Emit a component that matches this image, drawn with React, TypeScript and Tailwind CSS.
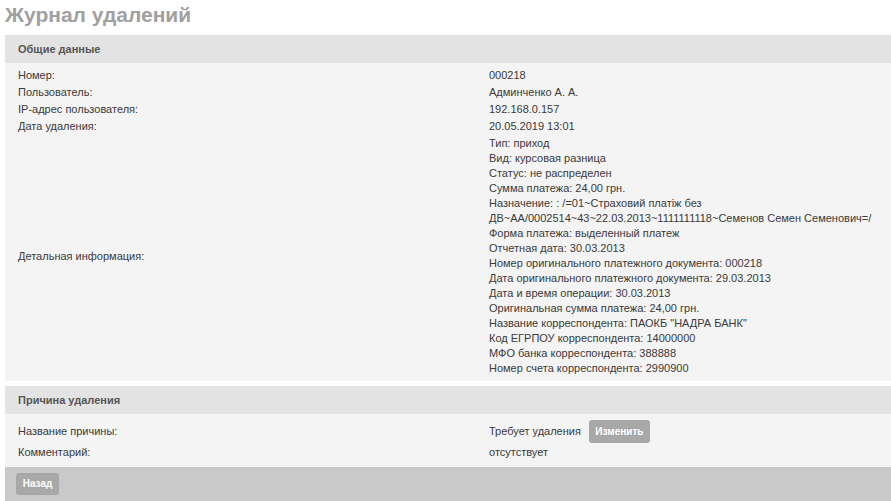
/* Журнал удалений — карточка удалённой записи */

const general: [string, string][] = [
  ['Номер:', '000218'],
  ['Пользователь:', 'Админченко А. А.'],
  ['IP-адрес пользователя:', '192.168.0.157'],
  ['Дата удаления:', '20.05.2019 13:01'],
];

const details = [
  'Тип: приход',
  'Вид: курсовая разница',
  'Статус: не распределен',
  'Сумма платежа: 24,00 грн.',
  'Назначение: : /=01~Страховий платіж без',
  'ДВ~АА/0002514~43~22.03.2013~1111111118~Семенов Семен Семенович=/',
  'Форма платежа: выделенный платеж',
  'Отчетная дата: 30.03.2013',
  'Номер оригинального платежного документа: 000218',
  'Дата оригинального платежного документа: 29.03.2013',
  'Дата и время операции: 30.03.2013',
  'Оригинальная сумма платежа: 24,00 грн.',
  'Название корреспондента: ПАОКБ "НАДРА БАНК"',
  'Код ЕГРПОУ корреспондента: 14000000',
  'МФО банка корреспондента: 388888',
  'Номер счета корреспондента: 2990900',
];

function SectionHeader({ title }: { title: string }) {
  return (
    <div className="h-[28px] bg-[#e3e3e3] flex items-center pl-[13px] text-[11px] font-bold text-[#555]">
      {title}
    </div>
  );
}

function Btn({ label, className = '' }: { label: string; className?: string }) {
  return (
    <button
      className={`bg-[#a8a8a8] text-white font-bold text-[10px] rounded-[3px] leading-none ${className}`}
    >
      {label}
    </button>
  );
}

export default function App() {
  return (
    <div
      className="min-h-[501px] bg-white pl-[5px] text-[11px] text-[#3a3a3a]"
      style={{ fontFamily: '"Liberation Sans", Arial, sans-serif' }}
    >
      <h1 className="h-[35px] pt-[3px] text-[21px] font-bold text-[#a0a0a0] leading-[24px]">
        Журнал удалений
      </h1>

      {/* Общие данные */}
      <SectionHeader title="Общие данные" />
      <div className="bg-[#f4f4f4] pt-[4px] pb-[4px] pl-[13px] leading-[15px]">
        {general.map(([k, v]) => (
          <div key={k} className="grid grid-cols-[471px_1fr] py-[1px]">
            <span>{k}</span>
            <span>{v}</span>
          </div>
        ))}
        <div className="grid grid-cols-[471px_1fr] items-center py-[1px]">
          <span>Детальная информация:</span>
          <div className="flex flex-col">
            {details.map((d) => (
              <span key={d}>{d}</span>
            ))}
          </div>
        </div>
      </div>

      <div className="h-[5px]" />

      {/* Причина удаления */}
      <SectionHeader title="Причина удаления" />
      <div className="bg-[#f4f4f4] pt-[6px] pb-[5px] pl-[13px] leading-[15px]">
        <div className="grid grid-cols-[471px_1fr] items-center">
          <span>Название причины:</span>
          <div className="flex items-center gap-[8px]">
            <span>Требует удаления</span>
            <Btn label="Изменить" className="w-[61px] h-[23px]" />
          </div>
        </div>
        <div className="grid grid-cols-[471px_1fr] py-[2px]">
          <span>Комментарий:</span>
          <span>отсутствует</span>
        </div>
      </div>

      <div className="bg-[#c9c9c9] h-[34px] flex items-center pl-[11px]">
        <Btn label="Назад" className="w-[43px] h-[22px]" />
      </div>
    </div>
  );
}
